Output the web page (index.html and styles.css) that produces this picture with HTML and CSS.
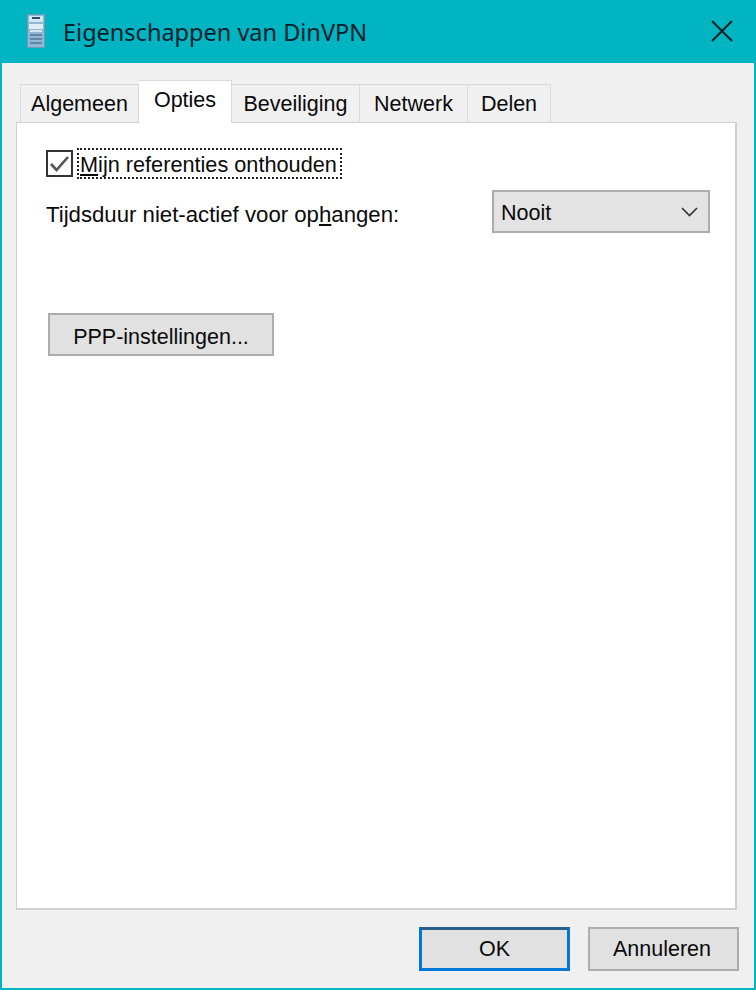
FILE: index.html
```html
<!DOCTYPE html>
<html lang="nl">
<head>
  <meta charset="UTF-8" />
  <title>Eigenschappen van DinVPN</title>
  <link rel="stylesheet" href="styles.css">
</head>
<body>
  <div class="window">
    <div class="titlebar">
      <svg class="app-icon" width="18" height="34" viewBox="0 0 18 34">
        <rect x="0.5" y="0.5" width="17" height="33" fill="#8fb6d2" stroke="#6f9bb8"/>
        <rect x="2" y="2" width="14" height="6" fill="#d6e6f2"/>
        <rect x="5" y="3" width="8" height="2" fill="#2e4f6e"/>
        <rect x="2" y="10" width="14" height="5" fill="#e2eef7"/>
        <rect x="3" y="16" width="12" height="2" fill="#d5e6f2"/>
        <rect x="3" y="20" width="12" height="2" fill="#5f86a6"/>
        <rect x="3" y="24" width="12" height="2" fill="#5f86a6"/>
        <rect x="3" y="28" width="12" height="2" fill="#5f86a6"/>
      </svg>
      <span class="title">Eigenschappen van DinVPN</span>
      <svg class="close" width="22" height="22" viewBox="0 0 22 22">
        <path d="M1 1 L21 21 M21 1 L1 21" stroke="#0a1a1c" stroke-width="1.8" fill="none"/>
      </svg>
    </div>

    <div class="content">
      <div class="tabs">
        <div class="tab tab-algemeen">Algemeen</div>
        <div class="tab tab-opties active">Opties</div>
        <div class="tab tab-beveiliging">Beveiliging</div>
        <div class="tab tab-netwerk">Netwerk</div>
        <div class="tab tab-delen">Delen</div>
      </div>

      <div class="panel">
        <div class="check-row">
          <svg class="checkbox" width="27" height="27" viewBox="0 0 27 27">
            <rect x="1" y="1" width="25" height="25" fill="#fff" stroke="#333" stroke-width="2"/>
            <path d="M5 14 L10.5 20 L22 7" stroke="#555" stroke-width="2.6" fill="none"/>
          </svg>
          <span class="focus-label"><u>M</u>ijn referenties onthouden</span>
        </div>

        <div class="idle-row">
          <span>Tijdsduur niet-actief voor op<u>h</u>angen:</span>
          <div class="combo">
            <span>Nooit</span>
            <svg width="17" height="10" viewBox="0 0 17 10">
              <path d="M1 1 L8.5 8.5 L16 1" stroke="#333" stroke-width="1.6" fill="none"/>
            </svg>
          </div>
        </div>

        <div class="btn btn-ppp">PPP-instellin<u>g</u>en...</div>
      </div>

      <div class="footer">
        <div class="btn btn-dialog btn-default">OK</div>
        <div class="btn btn-dialog btn-cancel">Annuleren</div>
      </div>
    </div>
  </div>
</body>
</html>
```

FILE: styles.css
```css
html, body {
  margin: 0;
  padding: 0;
}

body {
  width: 756px;
  height: 990px;
  overflow: hidden;
  font-family: "Liberation Sans", Arial, sans-serif;
  font-size: 21.5px;
  color: #0a0a0a;
}

.window {
  box-sizing: border-box;
  width: 756px;
  height: 990px;
  display: flex;
  flex-direction: column;
  background-color: #00b4c1;
  padding: 0 2px 2px 2px;
}

.titlebar {
  height: 63px;
  flex-shrink: 0;
  display: flex;
  align-items: center;
  padding-left: 25px;
}

.app-icon {
  margin-bottom: 2px;
}

.title {
  margin-left: 18px;
  font-family: "Noto Sans", "Liberation Sans", sans-serif;
  font-size: 23.5px;
  color: #04202a;
}

.close {
  margin-left: auto;
  margin-right: 21px;
  margin-top: -1px;
}

.content {
  flex: 1;
  display: flex;
  flex-direction: column;
  background-color: #f0f0f0;
  padding: 18px 17px 0 14px;
}

.tabs {
  display: flex;
  height: 42px;
  padding-left: 4px;
  align-items: flex-end;
  position: relative;
  z-index: 1;
  margin-bottom: -1px;
}

.tab {
  box-sizing: border-box;
  height: 39px;
  display: flex;
  align-items: center;
  justify-content: center;
  border: 1px solid #d9d9d9;
  border-left: none;
  border-bottom: 1px solid #d0d0d0;
  background-color: #f0f0f0;
  padding-top: 2px;
}

.tab-algemeen {
  width: 119px;
  border-left: 1px solid #d9d9d9;
}

.tab.active {
  height: 43px;
  background-color: #fff;
  border-bottom: none;
  padding-bottom: 4px;
  padding-top: 0;
}

.tab-opties { width: 93px; }
.tab-beveiliging { width: 128px; }
.tab-netwerk { width: 108px; }
.tab-delen { width: 83px; }

.panel {
  flex: 1;
  box-sizing: border-box;
  background-color: #fff;
  border: 1px solid #d0d0d0;
  border-width: 1px 2px 2px 1px;
  padding: 25px 25px 0 29px;
}

.check-row {
  display: flex;
  align-items: center;
  height: 31px;
}

.focus-label {
  margin-left: 4px;
  padding: 0 3px 0 1px;
  height: 27px;
  line-height: 29px;
  font-size: 21.7px;
  border: 2px dotted #222;
  white-space: nowrap;
}

.idle-row {
  display: flex;
  align-items: center;
  justify-content: space-between;
  margin-top: 11px;
  height: 43px;
}

.idle-row > span {
  font-size: 22.2px;
  padding-top: 7px;
}

.combo {
  box-sizing: border-box;
  width: 218px;
  height: 43px;
  display: flex;
  align-items: center;
  justify-content: space-between;
  padding: 3px 10px 0 7px;
  background-color: #e3e3e3;
  border: 2px solid #adadad;
}

.combo svg {
  margin-top: -3px;
}

.btn {
  box-sizing: border-box;
  display: flex;
  align-items: center;
  justify-content: center;
  background-color: #e1e1e1;
  border: 2px solid #adadad;
}

.btn-ppp {
  width: 226px;
  height: 43px;
  margin-top: 80px;
  margin-left: 2px;
  padding-top: 5px;
}

.footer {
  height: 78px;
  flex-shrink: 0;
  display: flex;
  justify-content: flex-end;
  gap: 18px;
  padding-top: 17px;
  box-sizing: border-box;
  margin-right: -2px;
}

.btn-dialog {
  width: 151px;
  height: 44px;
}

.btn-default {
  border: 3px solid #0078d7;
  border-top-color: #2a5d8c;
}

.btn-cancel {
  padding-right: 3px;
}
```
